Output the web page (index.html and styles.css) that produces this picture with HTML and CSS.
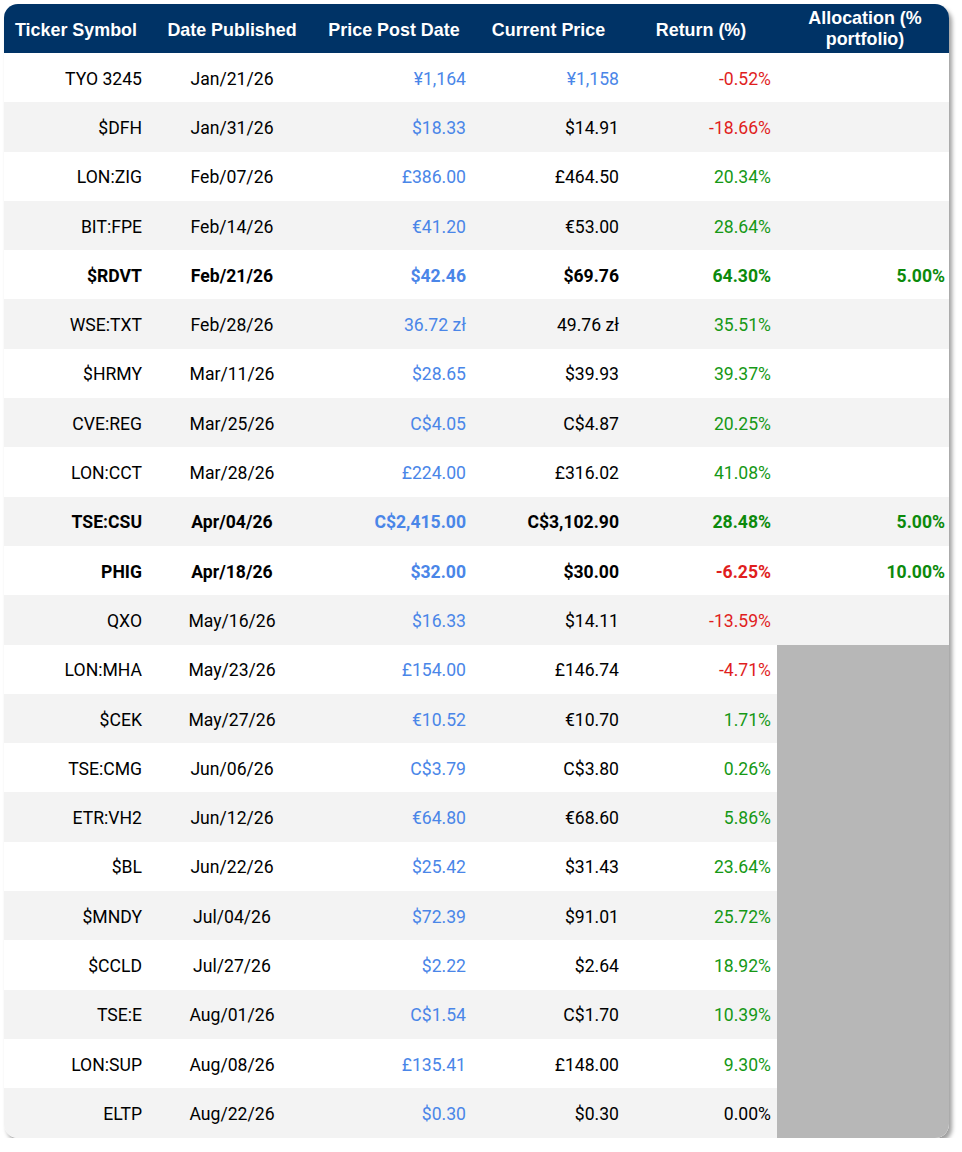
FILE: index.html
```html
<!DOCTYPE html>
<html>
<head>
<meta charset="utf-8">
<link rel="stylesheet" href="styles.css">
</head>
<body>
<div class="card">
<table class="tbl">
<colgroup>
<col class="c1"><col class="c2"><col class="c3"><col class="c4"><col class="c5"><col class="c6">
</colgroup>
<thead>
<tr>
<th>Ticker Symbol</th><th>Date Published</th><th>Price Post Date</th><th>Current Price</th><th>Return (%)</th><th class="alloc">Allocation (% portfolio)</th>
</tr>
</thead>
<tbody>
<tr><td class="tk">TYO 3245</td><td class="dt">Jan/21/26</td><td class="num blue">¥1,164</td><td class="num blue">¥1,158</td><td class="num red">-0.52%</td><td></td></tr>
<tr><td class="tk">$DFH</td><td class="dt">Jan/31/26</td><td class="num blue">$18.33</td><td class="num">$14.91</td><td class="num red">-18.66%</td><td></td></tr>
<tr><td class="tk">LON:ZIG</td><td class="dt">Feb/07/26</td><td class="num blue">£386.00</td><td class="num">£464.50</td><td class="num green">20.34%</td><td></td></tr>
<tr><td class="tk">BIT:FPE</td><td class="dt">Feb/14/26</td><td class="num blue">€41.20</td><td class="num">€53.00</td><td class="num green">28.64%</td><td></td></tr>
<tr class="b"><td class="tk">$RDVT</td><td class="dt">Feb/21/26</td><td class="num blue">$42.46</td><td class="num">$69.76</td><td class="num green">64.30%</td><td class="num green last">5.00%</td></tr>
<tr><td class="tk">WSE:TXT</td><td class="dt">Feb/28/26</td><td class="num blue">36.72 zł</td><td class="num">49.76 zł</td><td class="num green">35.51%</td><td></td></tr>
<tr><td class="tk">$HRMY</td><td class="dt">Mar/11/26</td><td class="num blue">$28.65</td><td class="num">$39.93</td><td class="num green">39.37%</td><td></td></tr>
<tr><td class="tk">CVE:REG</td><td class="dt">Mar/25/26</td><td class="num blue">C$4.05</td><td class="num">C$4.87</td><td class="num green">20.25%</td><td></td></tr>
<tr><td class="tk">LON:CCT</td><td class="dt">Mar/28/26</td><td class="num blue">£224.00</td><td class="num">£316.02</td><td class="num green">41.08%</td><td></td></tr>
<tr class="b"><td class="tk">TSE:CSU</td><td class="dt">Apr/04/26</td><td class="num blue">C$2,415.00</td><td class="num">C$3,102.90</td><td class="num green">28.48%</td><td class="num green last">5.00%</td></tr>
<tr class="b"><td class="tk">PHIG</td><td class="dt">Apr/18/26</td><td class="num blue">$32.00</td><td class="num">$30.00</td><td class="num red">-6.25%</td><td class="num green last">10.00%</td></tr>
<tr><td class="tk">QXO</td><td class="dt">May/16/26</td><td class="num blue">$16.33</td><td class="num">$14.11</td><td class="num red">-13.59%</td><td></td></tr>
<tr><td class="tk">LON:MHA</td><td class="dt">May/23/26</td><td class="num blue">£154.00</td><td class="num">£146.74</td><td class="num red">-4.71%</td><td class="na"></td></tr>
<tr><td class="tk">$CEK</td><td class="dt">May/27/26</td><td class="num blue">€10.52</td><td class="num">€10.70</td><td class="num green">1.71%</td><td class="na"></td></tr>
<tr><td class="tk">TSE:CMG</td><td class="dt">Jun/06/26</td><td class="num blue">C$3.79</td><td class="num">C$3.80</td><td class="num green">0.26%</td><td class="na"></td></tr>
<tr><td class="tk">ETR:VH2</td><td class="dt">Jun/12/26</td><td class="num blue">€64.80</td><td class="num">€68.60</td><td class="num green">5.86%</td><td class="na"></td></tr>
<tr><td class="tk">$BL</td><td class="dt">Jun/22/26</td><td class="num blue">$25.42</td><td class="num">$31.43</td><td class="num green">23.64%</td><td class="na"></td></tr>
<tr><td class="tk">$MNDY</td><td class="dt">Jul/04/26</td><td class="num blue">$72.39</td><td class="num">$91.01</td><td class="num green">25.72%</td><td class="na"></td></tr>
<tr><td class="tk">$CCLD</td><td class="dt">Jul/27/26</td><td class="num blue">$2.22</td><td class="num">$2.64</td><td class="num green">18.92%</td><td class="na"></td></tr>
<tr><td class="tk">TSE:E</td><td class="dt">Aug/01/26</td><td class="num blue">C$1.54</td><td class="num">C$1.70</td><td class="num green">10.39%</td><td class="na"></td></tr>
<tr><td class="tk">LON:SUP</td><td class="dt">Aug/08/26</td><td class="num blue">£135.41</td><td class="num">£148.00</td><td class="num green">9.30%</td><td class="na"></td></tr>
<tr><td class="tk">ELTP</td><td class="dt">Aug/22/26</td><td class="num blue">$0.30</td><td class="num">$0.30</td><td class="num">0.00%</td><td class="na"></td></tr>
</tbody>
</table>
</div>
</body>
</html>
```
FILE: styles.css
```css
html, body {
  margin: 0;
  padding: 0;
  background: #ffffff;
}
body {
  padding: 4px 0 0 4px;
}
.card {
  width: 945px;
  border-radius: 14px;
  overflow: hidden;
  background: #ffffff;
  box-shadow: 3px 4px 4px rgba(0, 0, 0, 0.38);
}
.tbl {
  width: 945px;
  border-collapse: collapse;
  table-layout: fixed;
  font-family: Roboto, "Liberation Sans", sans-serif;
  font-size: 17.6px;
  color: #000000;
}
.c1 { width: 144px; }
.c2 { width: 168px; }
.c3 { width: 156px; }
.c4 { width: 153px; }
.c5 { width: 152px; }
.c6 { width: 172px; }
.tbl thead tr {
  background: #003366;
  height: 49px;
}
.tbl th {
  color: #ffffff;
  font-family: "Liberation Sans", Arial, sans-serif;
  font-weight: bold;
  font-size: 17.9px;
  line-height: 21px;
  text-align: center;
  padding: 3px 2px 0;
  vertical-align: middle;
}
.tbl th.alloc {
  padding-top: 3px;
  padding-bottom: 2px;
  padding-left: 20px;
  padding-right: 16px;
}
.tbl tbody tr {
  height: 49.3px;
}
.tbl tbody tr:nth-child(even) {
  background: #f3f3f3;
}
.tbl td {
  padding: 2px 6px 0;
  vertical-align: middle;
  white-space: nowrap;
}
.tk { text-align: right; }
.dt { text-align: center; }
.num { text-align: right; }
.tbl td.last { padding-right: 4px; }
.blue { color: #4a86e8; }
.red { color: #e01e1e; }
.green { color: #169816; }
.b td { font-weight: bold; }
.b td.green { color: #0c8a0c; }
.na { background: #b7b7b7; }
```
